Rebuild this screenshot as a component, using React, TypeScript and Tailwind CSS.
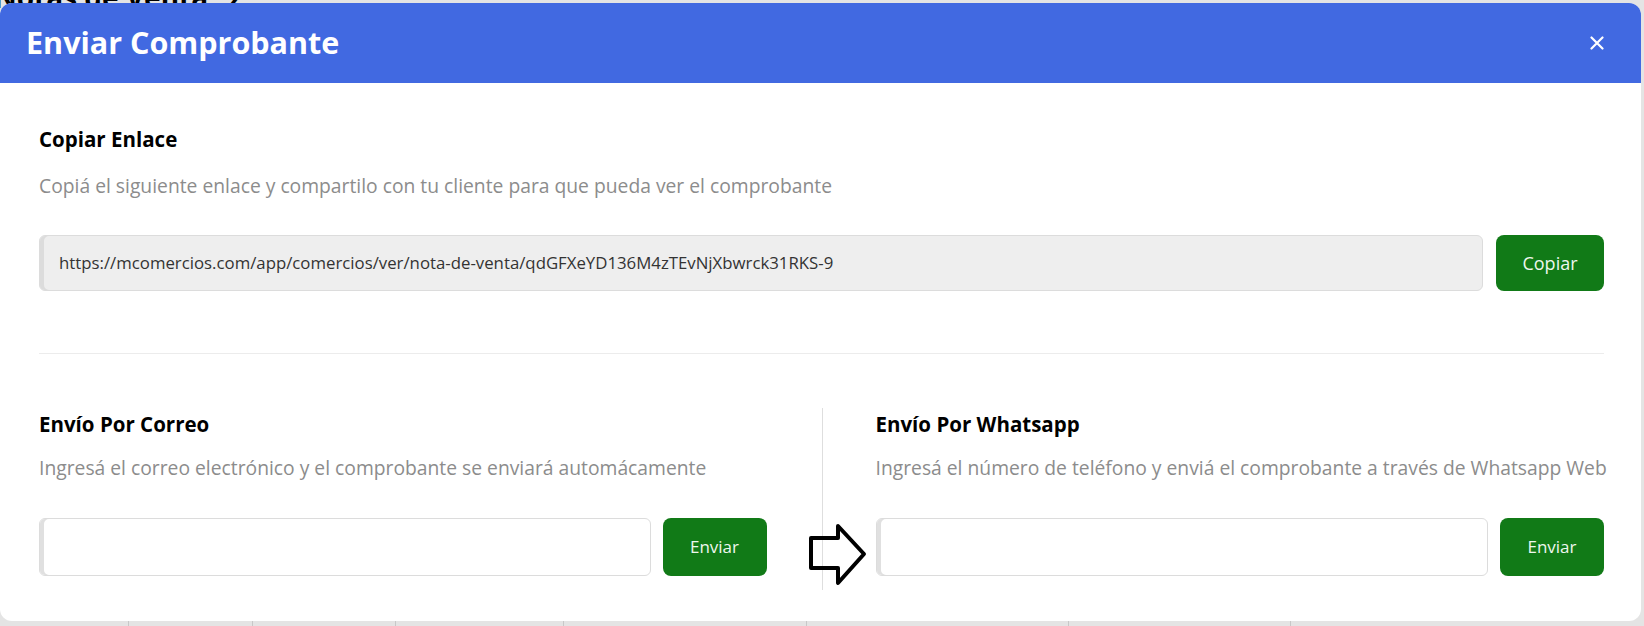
import React from "react";

const font = { fontFamily: '"Open Sans", "Noto Sans", sans-serif' };

function Arrow() {
  return (
    <svg width="62" height="64" viewBox="0 0 62 64" className="absolute left-[807px] top-[519px]">
      <path
        d="M4 16 L31 16 L31 4 L57 32 L31 61 L31 46 L4 46 Z"
        fill="none"
        stroke="#000"
        strokeWidth="4"
        strokeLinejoin="round"
      />
    </svg>
  );
}

function SendColumn({ title, desc, divider }: { title: string; desc: string; divider?: boolean }) {
  return (
    <div className={divider ? "border-l border-[#dedede] pl-[53px] pt-[2px] pb-[14px]" : "pr-[55px] pt-[2px] pb-[14px]"}>
      <h3 className="text-[20.5px] font-bold leading-[28px] text-black">{title}</h3>
      <p className="mt-[16px] text-[19.3px] leading-[28px] text-[#8c8c8c] whitespace-nowrap">{desc}</p>
      <div className="mt-[36px] flex gap-[12px]">
        <div className="h-[58px] flex-1 rounded-[6px] border border-[#dcdcdc] bg-white shadow-[inset_4px_0_0_#e0e0e0]" />
        <button className="h-[58px] w-[104px] rounded-[8px] bg-[#117a17] text-[17px] text-[#eef7ee]">Enviar</button>
      </div>
    </div>
  );
}

export default function App() {
  return (
    <div className="relative h-[626px] w-[1644px] overflow-hidden bg-[#e4e4e4]" style={font}>
      <div className="absolute left-[-6px] top-[-24px] flex items-center gap-[20px] text-[28px] font-bold text-black">
        <span>Notas de Venta</span>
        <span>›</span>
      </div>
      <div className="absolute bottom-0 left-0 flex h-[6px] w-full">
        {[128, 252, 395, 563, 806, 1068, 1290].map((x) => (
          <div key={x} className="absolute top-0 h-full w-px bg-[#c8c8c8]" style={{ left: x }} />
        ))}
      </div>
      <div className="relative mt-[3px] w-[1641px] overflow-hidden rounded-[12px] bg-white">
        <div className="flex h-[80px] items-center justify-between bg-[#4169e1] pl-[26px] pr-[37px]">
          <h2 className="text-[30.5px] font-bold text-white">Enviar Comprobante</h2>
          <svg width="14" height="14" viewBox="0 0 14 14">
            <path d="M1.5 1.5 L12.5 12.5 M12.5 1.5 L1.5 12.5" stroke="#fff" strokeWidth="2.2" strokeLinecap="round" />
          </svg>
        </div>
        <div className="pl-[39px] pr-[37px] pt-[42px] pb-[31px]">
          <h3 className="text-[20.5px] font-bold leading-[28px] text-black">Copiar Enlace</h3>
          <p className="mt-[19px] text-[19.3px] leading-[28px] text-[#8c8c8c]">
            Copiá el siguiente enlace y compartilo con tu cliente para que pueda ver el comprobante
          </p>
          <div className="mt-[35px] flex gap-[13px]">
            <div className="flex h-[56px] flex-1 items-center rounded-[6px] border border-[#dcdcdc] bg-[#eeeeee] pl-[19px] text-[16.8px] text-[#333] shadow-[inset_4px_0_0_#dcdcdc]">
              https://mcomercios.com/app/comercios/ver/nota-de-venta/qdGFXeYD136M4zTEvNjXbwrck31RKS-9
            </div>
            <button className="h-[56px] w-[108px] rounded-[8px] bg-[#117a17] text-[18px] text-[#eef7ee]">Copiar</button>
          </div>
          <div className="mt-[62px] h-px bg-[#ececec]" />
          <div className="mt-[54px] grid grid-cols-2">
            <SendColumn
              title="Envío Por Correo"
              desc="Ingresá el correo electrónico y el comprobante se enviará automácamente"
            />
            <SendColumn
              title="Envío Por Whatsapp"
              desc="Ingresá el número de teléfono y enviá el comprobante a través de Whatsapp Web"
              divider
            />
          </div>
        </div>
        <Arrow />
      </div>
    </div>
  );
}
